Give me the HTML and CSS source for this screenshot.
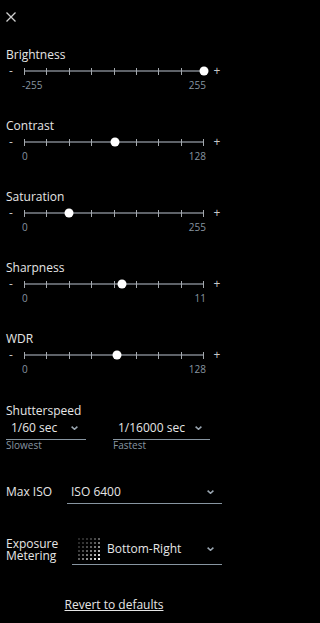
FILE: index.html
```html
<!DOCTYPE html>
<html>
<head>
<meta charset="utf-8">
<link rel="stylesheet" href="styles.css">
</head>
<body>
<div class="panel">
  <svg class="close" viewBox="0 0 10 10" width="10" height="10"><path d="M0.5 0.5 L9.5 9.5 M9.5 0.5 L0.5 9.5" stroke="#d0d0d0" stroke-width="1.3" fill="none"/></svg>

  <div class="sliders">
    <div class="slider-section">
      <div class="label">Brightness</div>
      <div class="slider-row">
        <span class="minus">-</span>
        <div class="track">
          <i class="tick"></i><i class="tick"></i><i class="tick"></i><i class="tick"></i><i class="tick"></i><i class="tick"></i><i class="tick"></i><i class="tick"></i><i class="tick"></i>
          <span class="thumb" style="left:100%"></span>
        </div>
        <span class="plus">+</span>
      </div>
      <div class="range"><span>-255</span><span>255</span></div>
    </div>

    <div class="slider-section">
      <div class="label">Contrast</div>
      <div class="slider-row">
        <span class="minus">-</span>
        <div class="track">
          <i class="tick"></i><i class="tick"></i><i class="tick"></i><i class="tick"></i><i class="tick"></i><i class="tick"></i><i class="tick"></i><i class="tick"></i><i class="tick"></i>
          <span class="thumb" style="left:50.5%"></span>
        </div>
        <span class="plus">+</span>
      </div>
      <div class="range"><span>0</span><span>128</span></div>
    </div>

    <div class="slider-section">
      <div class="label">Saturation</div>
      <div class="slider-row">
        <span class="minus">-</span>
        <div class="track">
          <i class="tick"></i><i class="tick"></i><i class="tick"></i><i class="tick"></i><i class="tick"></i><i class="tick"></i><i class="tick"></i><i class="tick"></i><i class="tick"></i>
          <span class="thumb" style="left:25.1%"></span>
        </div>
        <span class="plus">+</span>
      </div>
      <div class="range"><span>0</span><span>255</span></div>
    </div>

    <div class="slider-section">
      <div class="label">Sharpness</div>
      <div class="slider-row">
        <span class="minus">-</span>
        <div class="track">
          <i class="tick"></i><i class="tick"></i><i class="tick"></i><i class="tick"></i><i class="tick"></i><i class="tick"></i><i class="tick"></i><i class="tick"></i><i class="tick"></i>
          <span class="thumb" style="left:54.5%"></span>
        </div>
        <span class="plus">+</span>
      </div>
      <div class="range"><span>0</span><span>11</span></div>
    </div>

    <div class="slider-section">
      <div class="label">WDR</div>
      <div class="slider-row">
        <span class="minus">-</span>
        <div class="track">
          <i class="tick"></i><i class="tick"></i><i class="tick"></i><i class="tick"></i><i class="tick"></i><i class="tick"></i><i class="tick"></i><i class="tick"></i><i class="tick"></i>
          <span class="thumb" style="left:51.6%"></span>
        </div>
        <span class="plus">+</span>
      </div>
      <div class="range"><span>0</span><span>128</span></div>
    </div>
  </div>

  <div class="shutter">
    <div class="label">Shutterspeed</div>
    <div class="shutter-row">
      <div class="shutter-col slow">
        <div class="select"><span>1/60 sec</span><svg class="chev" viewBox="0 0 7 4" width="7" height="4"><path d="M0.6 0.6 L3.5 3.3 L6.4 0.6" stroke="#9aa6b1" stroke-width="1.5" fill="none"/></svg></div>
        <div class="caption">Slowest</div>
      </div>
      <div class="shutter-col fast">
        <div class="select"><span>1/16000 sec</span><svg class="chev" viewBox="0 0 7 4" width="7" height="4"><path d="M0.6 0.6 L3.5 3.3 L6.4 0.6" stroke="#9aa6b1" stroke-width="1.5" fill="none"/></svg></div>
        <div class="caption">Fastest</div>
      </div>
    </div>
  </div>

  <div class="iso-row">
    <div class="iso-label">Max ISO</div>
    <div class="select wide"><span>ISO 6400</span><svg class="chev" viewBox="0 0 7 4" width="7" height="4"><path d="M0.6 0.6 L3.5 3.3 L6.4 0.6" stroke="#9aa6b1" stroke-width="1.5" fill="none"/></svg></div>
  </div>

  <div class="meter-row">
    <div class="meter-label">Exposure<br>Metering</div>
    <div class="select meter">
      <span class="meter-value">
        <svg class="grid" viewBox="0 0 22 22" width="22" height="22">
          <rect x="0" y="0" width="2" height="2" fill="#282828"/><rect x="4" y="0" width="2" height="2" fill="#2a2a2a"/><rect x="8" y="0" width="2" height="2" fill="#313131"/><rect x="12" y="0" width="2" height="2" fill="#3b3b3b"/><rect x="16" y="0" width="2" height="2" fill="#4a4a4a"/><rect x="20" y="0" width="2" height="2" fill="#5e5e5e"/>
          <rect x="0" y="4" width="2" height="2" fill="#2a2a2a"/><rect x="4" y="4" width="2" height="2" fill="#313131"/><rect x="8" y="4" width="2" height="2" fill="#3b3b3b"/><rect x="12" y="4" width="2" height="2" fill="#4a4a4a"/><rect x="16" y="4" width="2" height="2" fill="#5e5e5e"/><rect x="20" y="4" width="2" height="2" fill="#757575"/>
          <rect x="0" y="8" width="2" height="2" fill="#313131"/><rect x="4" y="8" width="2" height="2" fill="#3b3b3b"/><rect x="8" y="8" width="2" height="2" fill="#4a4a4a"/><rect x="12" y="8" width="2" height="2" fill="#5e5e5e"/><rect x="16" y="8" width="2" height="2" fill="#757575"/><rect x="20" y="8" width="2" height="2" fill="#919191"/>
          <rect x="0" y="12" width="2" height="2" fill="#3b3b3b"/><rect x="4" y="12" width="2" height="2" fill="#4a4a4a"/><rect x="8" y="12" width="2" height="2" fill="#5e5e5e"/><rect x="12" y="12" width="2" height="2" fill="#757575"/><rect x="16" y="12" width="2" height="2" fill="#919191"/><rect x="20" y="12" width="2" height="2" fill="#b2b2b2"/>
          <rect x="0" y="16" width="2" height="2" fill="#4a4a4a"/><rect x="4" y="16" width="2" height="2" fill="#5e5e5e"/><rect x="8" y="16" width="2" height="2" fill="#757575"/><rect x="12" y="16" width="2" height="2" fill="#919191"/><rect x="16" y="16" width="2" height="2" fill="#b2b2b2"/><rect x="20" y="16" width="2" height="2" fill="#d6d6d6"/>
          <rect x="0" y="20" width="2" height="2" fill="#5e5e5e"/><rect x="4" y="20" width="2" height="2" fill="#757575"/><rect x="8" y="20" width="2" height="2" fill="#919191"/><rect x="12" y="20" width="2" height="2" fill="#b2b2b2"/><rect x="16" y="20" width="2" height="2" fill="#d6d6d6"/><rect x="20" y="20" width="2" height="2" fill="#ffffff"/>
        </svg>
        <span>Bottom-Right</span>
      </span>
      <svg class="chev" viewBox="0 0 7 4" width="7" height="4"><path d="M0.6 0.6 L3.5 3.3 L6.4 0.6" stroke="#9aa6b1" stroke-width="1.5" fill="none"/></svg>
    </div>
  </div>

  <div class="revert"><a class="revert-link">Revert to defaults</a></div>
</div>
</body>
</html>
```

FILE: styles.css
```css
html, body {
  margin: 0;
  padding: 0;
  background: #000;
}
body {
  width: 232px;
  font-family: "Open Sans", "Noto Sans", sans-serif;
  font-size: 12px;
  color: #e6e6e6;
}
.panel {
  padding: 12px 10px 0 6px;
}
.close {
  display: block;
}
.sliders {
  margin-top: 25px;
  display: flex;
  flex-direction: column;
  gap: 27px;
}
.label {
  line-height: 16px;
}
.slider-row {
  display: flex;
  align-items: center;
  height: 14px;
  margin-top: 1px;
  line-height: 14px;
}
.minus, .plus {
  width: 10px;
  text-align: center;
  color: #c8c8c8;
}
.minus {
  margin-right: 8px;
}
.plus {
  margin-left: 8px;
}
.track {
  position: relative;
  width: 180px;
  height: 14px;
  display: flex;
  justify-content: space-between;
  align-items: center;
  background: linear-gradient(#5e6268, #5e6268) center / 100% 2px no-repeat;
}
.tick {
  display: block;
  width: 1px;
  height: 7px;
  background: #a3a8ad;
}
.thumb {
  position: absolute;
  top: 50%;
  width: 9px;
  height: 9px;
  border-radius: 50%;
  background: #fff;
  transform: translate(-50%, -50%);
}
.range {
  display: flex;
  justify-content: space-between;
  margin: 1px 0 0 16px;
  width: 184px;
  font-size: 10px;
  line-height: 12px;
  color: #8795a1;
}
.shutter {
  margin-top: 28px;
}
.shutter-row {
  display: flex;
  margin-top: 1px;
}
.select {
  display: flex;
  align-items: center;
  justify-content: space-between;
  box-sizing: border-box;
  border-bottom: 1px solid #8795a1;
  padding: 0 8px 3px 5px;
  line-height: 16px;
  color: #e6e6e6;
}
.chev {
  display: block;
  flex: none;
}
.shutter-col.slow {
  width: 80px;
}
.shutter-col.fast {
  width: 97px;
  margin-left: 27px;
}
.caption {
  font-size: 10px;
  line-height: 10px;
  color: #8795a1;
}
.iso-row {
  display: flex;
  align-items: flex-start;
  margin-top: 34px;
}
.iso-label {
  width: 61px;
  flex: none;
  line-height: 16px;
}
.select.wide {
  flex: 1;
  padding-left: 4px;
}
.meter-row {
  display: flex;
  align-items: flex-start;
  margin-top: 32px;
}
.meter-label {
  width: 66px;
  flex: none;
  line-height: 12px;
  margin-top: 2px;
}
.select.meter {
  flex: 1;
  padding: 2px 8px 4px 6px;
}
.meter-value {
  display: flex;
  align-items: center;
  gap: 7px;
}
.grid {
  display: block;
}
.revert {
  margin-top: 32px;
  text-align: center;
  line-height: 16px;
}
.revert-link {
  color: #e6e6e6;
  text-decoration: underline;
  text-underline-offset: 1px;
}
```
